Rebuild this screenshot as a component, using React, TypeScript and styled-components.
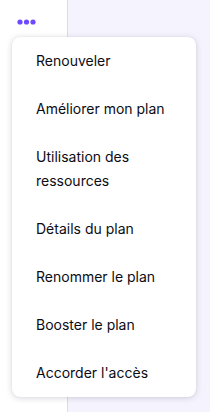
import React from 'react';
import styled, { createGlobalStyle } from 'styled-components';

const GlobalStyle = createGlobalStyle`
  html, body {
    margin: 0;
    padding: 0;
    height: 100%;
  }
  body {
    font-family: Inter, "Noto Sans", sans-serif;
    -webkit-font-smoothing: antialiased;
  }
  #root {
    height: 100%;
  }
`;

const Page = styled.div`
  position: relative;
  display: grid;
  grid-template-columns: 68px 1fr;
  height: 412px;
  background: #f5f4fe;
  overflow: hidden;
`;

const Sidebar = styled.aside`
  background: #ffffff;
  border-right: 1px solid #dcdce4;
  padding: 13px 0 0 14px;
`;

const Content = styled.main`
  background: #f5f4fe;
`;

const DotsButton = styled.button`
  display: flex;
  align-items: center;
  justify-content: center;
  width: 26px;
  height: 18px;
  padding: 0;
  border: none;
  background: transparent;
  cursor: pointer;
  color: #6d4aff;
`;

const Menu = styled.ul`
  position: absolute;
  top: 37px;
  left: 12px;
  width: 184px;
  margin: 0;
  padding: 0;
  list-style: none;
  background: #ffffff;
  border-radius: 8px;
  box-shadow: 0 1px 6px rgba(30, 30, 60, 0.18), 0 0 1px rgba(30, 30, 60, 0.12);
  box-sizing: border-box;
`;

const MenuItem = styled.li`
  padding: 12px 24px;
  font-size: 14px;
  line-height: 24px;
  color: #0c0c14;
  cursor: pointer;
`;

const items = [
  'Renouveler',
  'Améliorer mon plan',
  'Utilisation des ressources',
  'Détails du plan',
  'Renommer le plan',
  'Booster le plan',
  "Accorder l'accès",
];

function Dots() {
  return (
    <svg width="26" height="8" viewBox="0 0 26 8" fill="currentColor">
      <circle cx="6" cy="4" r="2.6" />
      <circle cx="12.5" cy="4" r="2.6" />
      <circle cx="19" cy="4" r="2.6" />
    </svg>
  );
}

export default function App() {
  return (
    <>
      <GlobalStyle />
      <Page>
        <Sidebar>
          <DotsButton aria-label="Plus d'actions">
            <Dots />
          </DotsButton>
        </Sidebar>
        <Content />
        <Menu>
          {items.map((label) => (
            <MenuItem key={label}>{label}</MenuItem>
          ))}
        </Menu>
      </Page>
    </>
  );
}
